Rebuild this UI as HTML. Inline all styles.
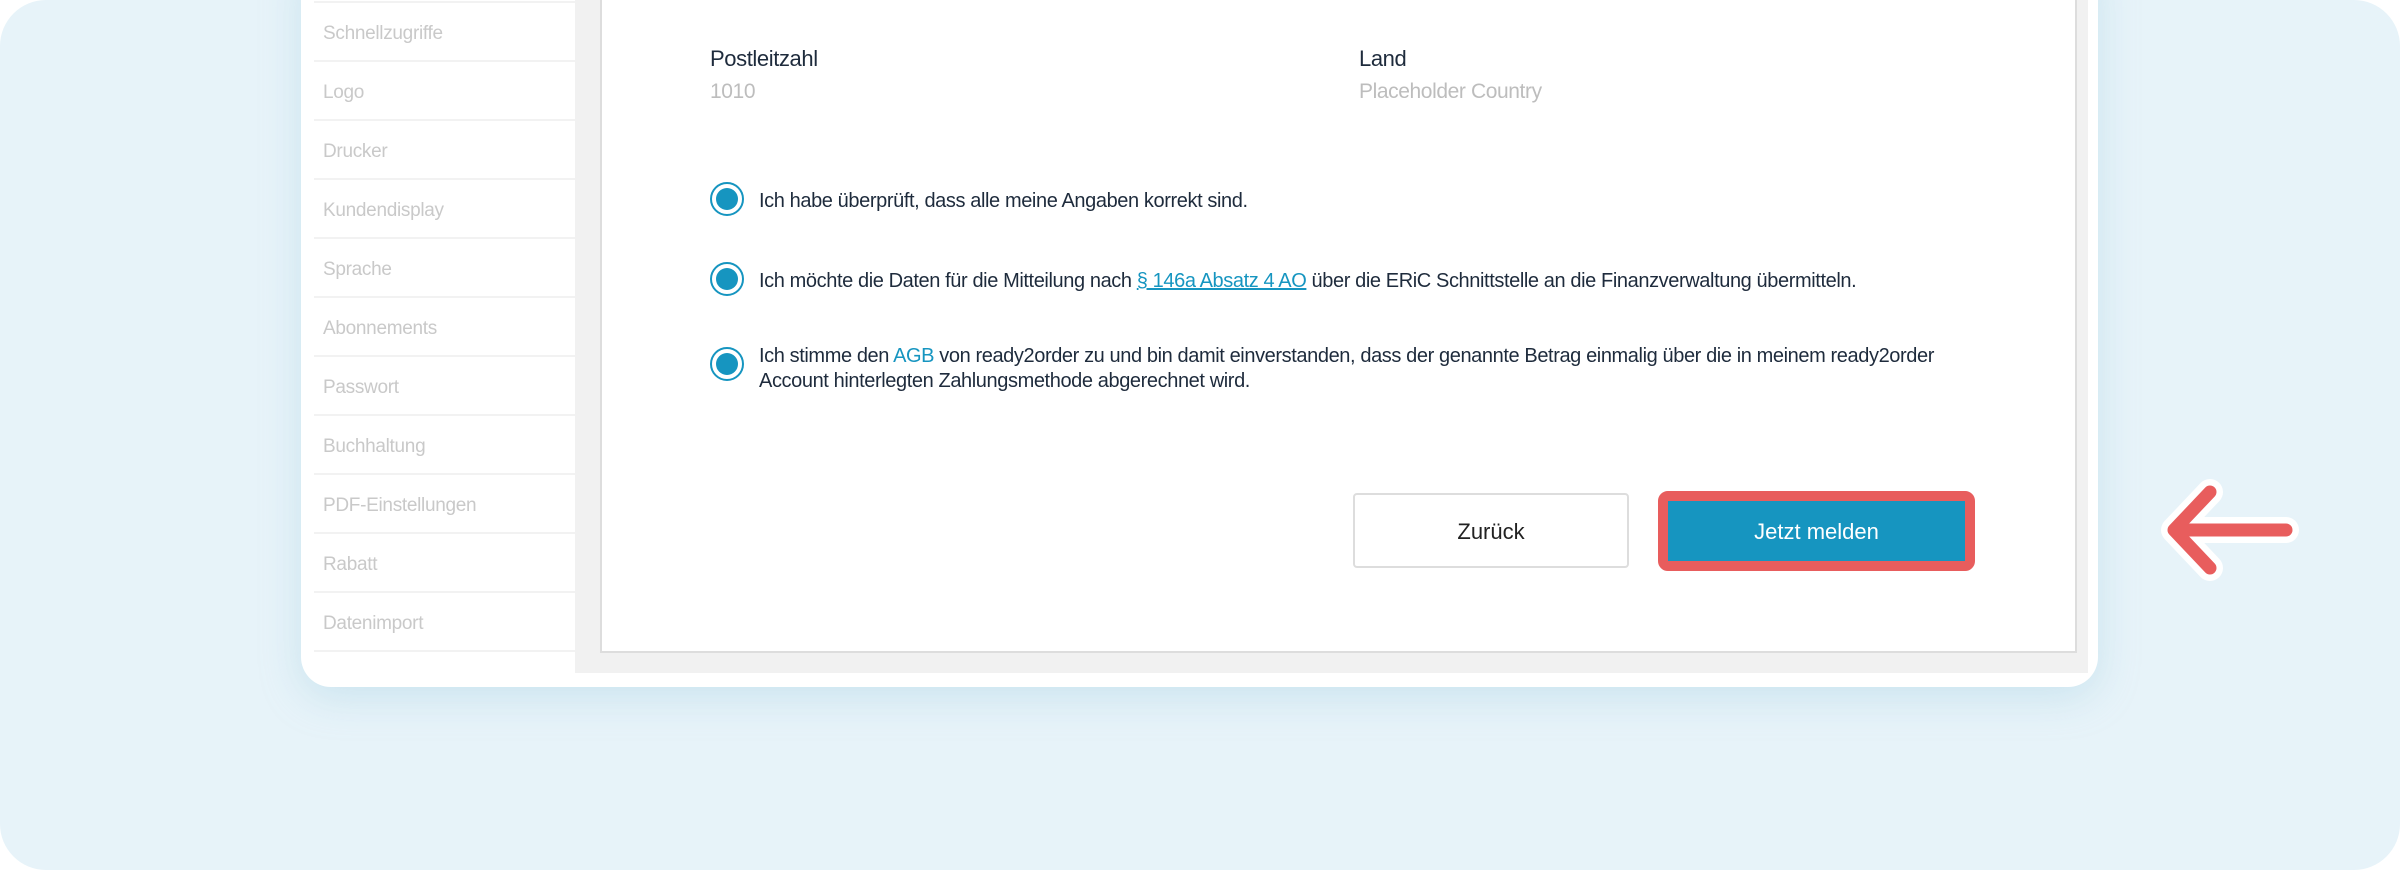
<!DOCTYPE html>
<html><head><meta charset="utf-8"><style>
*{margin:0;padding:0;box-sizing:border-box}
body{width:2400px;height:870px;background:#fff;position:relative;overflow:hidden;font-family:"Liberation Sans",sans-serif}
.bg{position:absolute;left:0;top:0;width:2400px;height:870px;background:#e7f3f9;border-radius:46px}
.card{position:absolute;left:301px;top:-40px;width:1797px;height:727px;background:#fff;border-radius:0 0 30px 30px;box-shadow:0 10px 40px rgba(150,200,220,.35)}
.side{position:absolute;left:314px;top:0;width:261px}
.side div{height:59px;border-bottom:2px solid #f2f2f2;color:#c9c9c9;font-size:19px;line-height:62px;padding-left:9px;letter-spacing:-.3px}
.grey{position:absolute;left:575px;top:0;width:1513px;height:673px;background:#f1f1f1}
.panel{position:absolute;left:600px;top:0;width:1477px;height:653px;background:#fff;border:2px solid #ddd;border-top:none}
.t{position:absolute;color:#1e2b3c;font-size:20px;white-space:nowrap;letter-spacing:-.4px}
.lbl{font-size:22px}
.val{color:#bdbdbd;font-size:21px}
.r{position:absolute;width:34px;height:34px;border:2px solid #1695c0;border-radius:50%;background:#fff}
.r::after{content:"";position:absolute;left:4px;top:4px;width:22px;height:22px;border-radius:50%;background:#1695c0}
a{color:#1695c0;text-decoration:underline}
.b1{position:absolute;left:1353px;top:493px;width:276px;height:75px;border:2px solid #ddd;border-radius:4px;font-size:22px;text-align:center;line-height:73px;color:#222}
.b2{position:absolute;left:1658px;top:491px;width:317px;height:80px;border:10px solid #e85d5d;border-radius:10px;background:#1695c0;color:#fff;font-size:22px;text-align:center;line-height:62px}
</style></head><body>
<div class="bg"></div>
<div class="card"></div>
<div class="side" style="top:3px">
<div>Schnellzugriffe</div><div>Logo</div><div>Drucker</div><div>Kundendisplay</div><div>Sprache</div><div>Abonnements</div><div>Passwort</div><div>Buchhaltung</div><div>PDF-Einstellungen</div><div>Rabatt</div><div>Datenimport</div>
</div>
<div style="position:absolute;left:314px;top:0;width:261px;height:3px;border-bottom:2px solid #f2f2f2"></div>
<div class="grey"></div>
<div class="panel"></div>
<div class="t lbl" style="left:710px;top:46px">Postleitzahl</div>
<div class="t val" style="left:710px;top:80px">1010</div>
<div class="t lbl" style="left:1359px;top:46px">Land</div>
<div class="t val" style="left:1359px;top:80px">Placeholder Country</div>
<div class="r" style="left:710px;top:182px"></div>
<div class="t" style="left:759px;top:190px">Ich habe überprüft, dass alle meine Angaben korrekt sind.</div>
<div class="r" style="left:710px;top:262px"></div>
<div class="t" style="left:759px;top:270px">Ich möchte die Daten für die Mitteilung nach <a>§ 146a Absatz 4 AO</a> über die ERiC Schnittstelle an die Finanzverwaltung übermitteln.</div>
<div class="r" style="left:710px;top:347px"></div>
<div class="t" style="left:759px;top:344px;line-height:25px">Ich stimme den <a style="text-decoration:none">AGB</a> von ready2order zu und bin damit einverstanden, dass der genannte Betrag einmalig über die in meinem ready2order<br>Account hinterlegten Zahlungsmethode abgerechnet wird.</div>
<div class="b1">Zurück</div>
<div class="b2">Jetzt melden</div>
<svg style="position:absolute;left:0;top:0" width="2400" height="870">
<path d="M2286 530 H2176 M2210 492 L2174 530 L2210 568" fill="none" stroke="#fff" stroke-width="26" stroke-linecap="round" stroke-linejoin="round"/>
<path d="M2286 530 H2176 M2210 492 L2174 530 L2210 568" fill="none" stroke="#e85d5d" stroke-width="13" stroke-linecap="round" stroke-linejoin="round"/>
</svg>
</body></html>
